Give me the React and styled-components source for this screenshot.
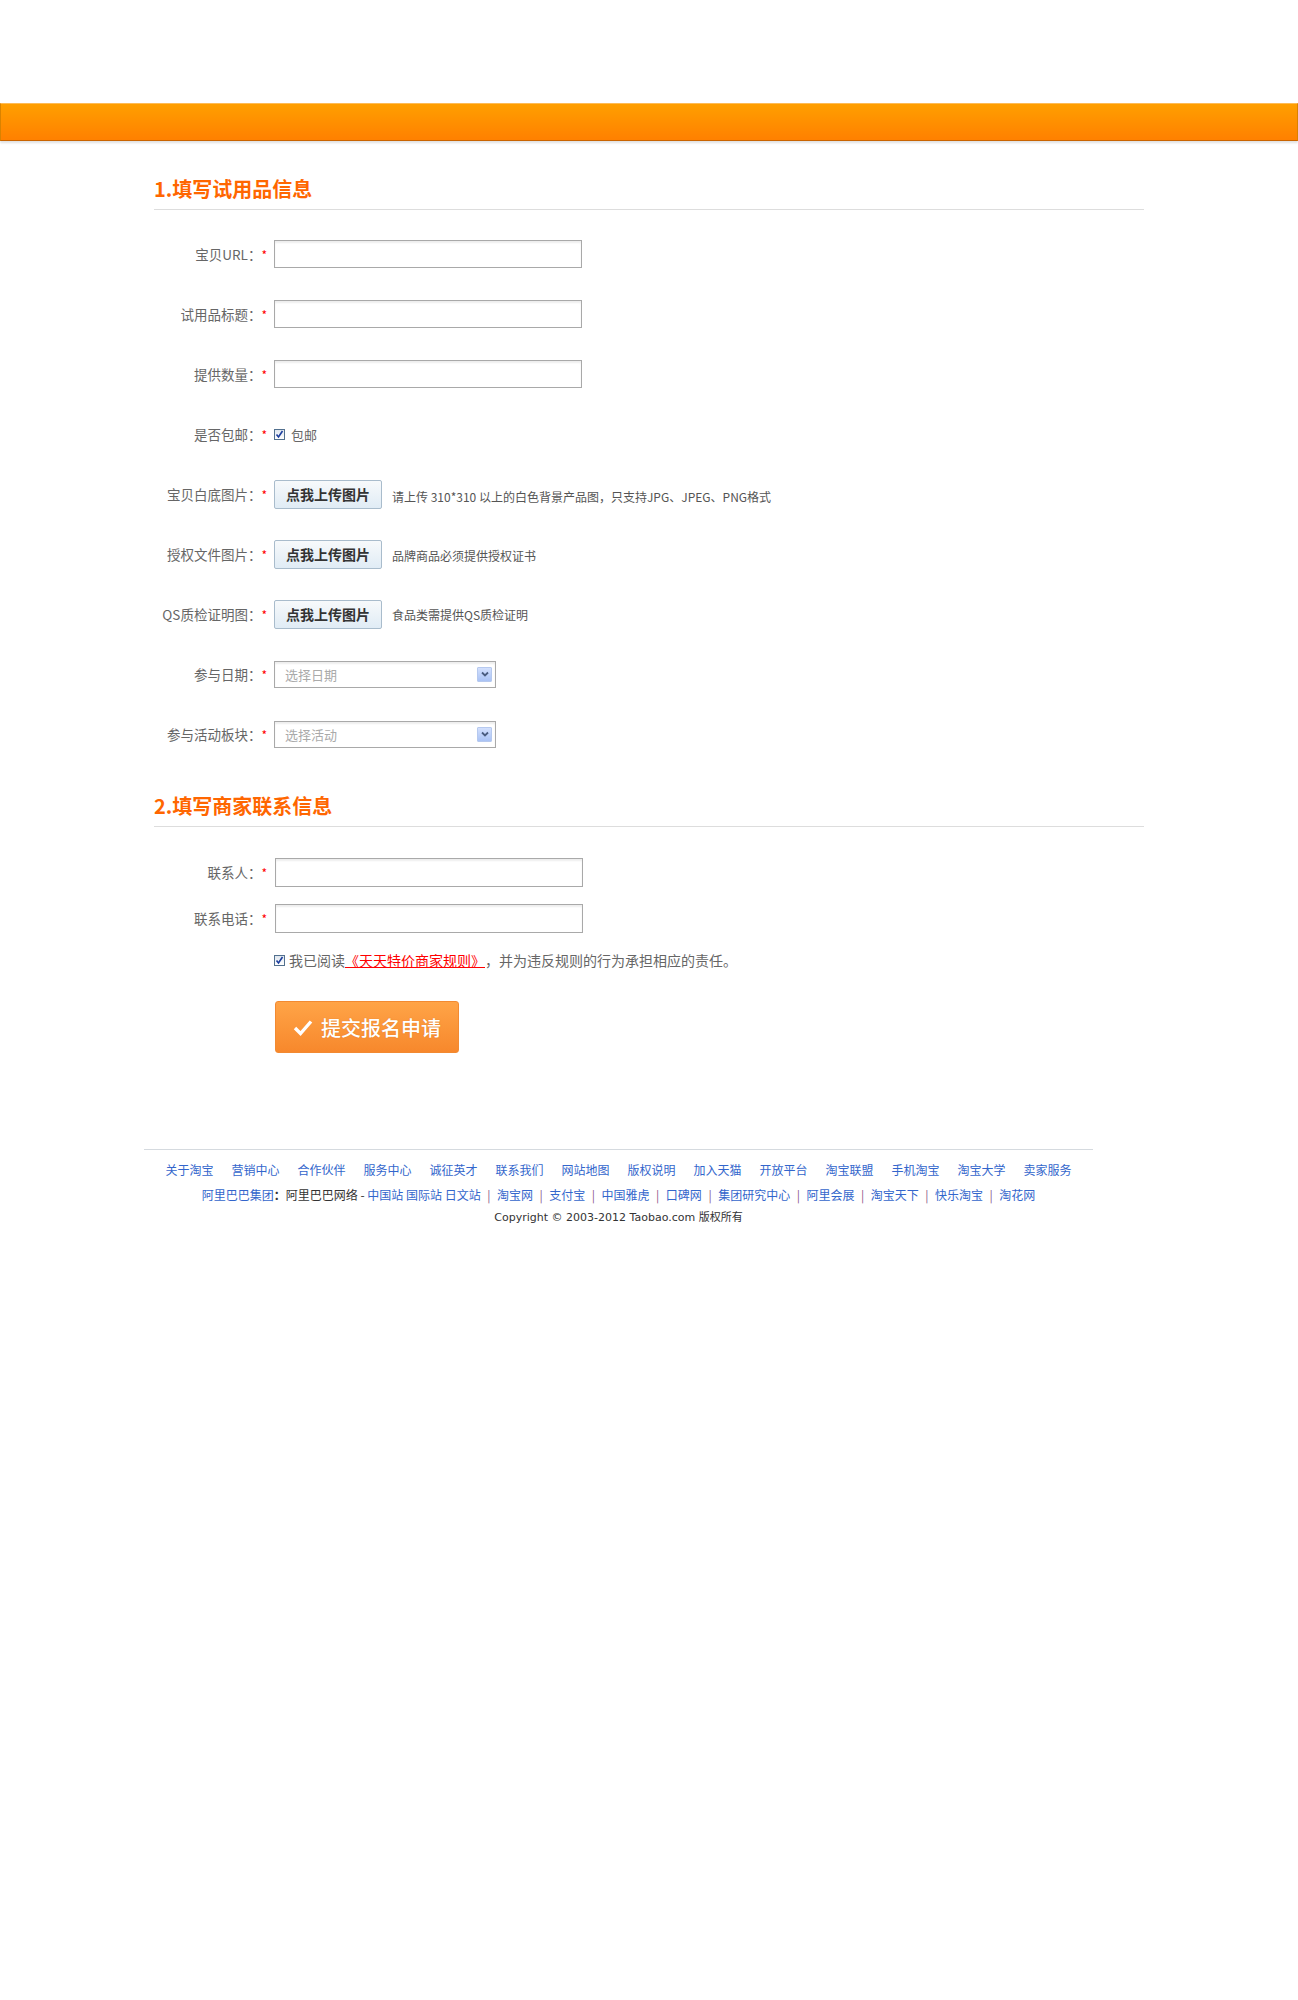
import React from 'react';
import styled, { createGlobalStyle } from 'styled-components';

const GlobalStyle = createGlobalStyle`
   body {
      margin: 0;
      background: #fff;
      font-family: 'Noto Sans CJK SC', 'Noto Sans', sans-serif;
      color: #666;
      text-spacing-trim: space-all;
   }
`;

const Page = styled.div`
   box-sizing: border-box;
   min-height: 2000px;
   padding-top: 103px;
`;

const TopBar = styled.div`
   height: 36px;
   background: linear-gradient(#ff9f00, #ff8000);
   border: 1px solid #d98200;
   border-top-color: #ffbb55;
   border-bottom-color: #c96400;
   box-shadow: 0 2px 2px rgba(0, 0, 0, 0.12);
`;

const Main = styled.div`
   width: 990px;
   margin: 0 auto;
`;

const SectionTitle = styled.h2`
   margin: ${(p) => p.top}px 0 0;
   padding: 0 0 8px;
   font-size: 20px;
   line-height: 24px;
   font-weight: bold;
   color: #ff6600;
   border-bottom: 1px solid #dddddd;
`;

const FormList = styled.div`
   margin-top: ${(p) => p.top}px;
   display: flex;
   flex-direction: column;
`;

const Row = styled.div`
   display: flex;
   align-items: center;
   height: ${(p) => p.h}px;
`;

const Label = styled.div`
   width: 120px;
   display: flex;
   justify-content: flex-end;
   align-items: center;
   font-size: 13.5px;
   color: #666;
   white-space: nowrap;
   .star {
      color: #ff0000;
      margin-right: 7px;
      font-size: 12px;
   }
`;

const TextInput = styled.input`
   box-sizing: border-box;
   width: 308px;
   height: ${(p) => p.h || 28}px;
   margin-left: ${(p) => p.shift || 0}px;
   border: 1px solid #a9a9a9;
   box-shadow: inset 0 2px 2px #eee;
   padding: 0 6px;
   font-size: 13px;
   outline: none;
`;

const Check = styled.span`
   box-sizing: border-box;
   display: inline-flex;
   align-items: center;
   justify-content: center;
   width: 11px;
   height: 11px;
   border: 1px solid #52708e;
   background: linear-gradient(#dfe6ee, #fff);
   svg {
      display: block;
   }
`;

const CheckText = styled.span`
   margin-left: ${(p) => p.gap || 6}px;
   font-size: ${(p) => p.size || 13}px;
   color: #666;
`;

const UploadButton = styled.button`
   box-sizing: border-box;
   width: 108px;
   height: 29px;
   border: 1px solid #a9bccc;
   border-radius: 2px;
   background: linear-gradient(#f7f9fb, #e0ecf5);
   font-family: inherit;
   font-size: 14px;
   font-weight: bold;
   color: #333;
   padding: 0;
   cursor: pointer;
`;

const Hint = styled.span`
   margin-left: 10px;
   margin-top: ${(p) => p.drop || 0}px;
   font-size: 12px;
   color: #555;
`;

const Select = styled.div`
   box-sizing: border-box;
   width: 222px;
   height: 27px;
   border: 1px solid #a9a9a9;
   box-shadow: inset 0 2px 2px #eee;
   display: flex;
   align-items: center;
   justify-content: space-between;
   padding: 0 3px 0 10px;
   font-size: 13px;
   color: #aaa;
`;

const SelectArrow = styled.span`
   box-sizing: border-box;
   width: 15px;
   height: 15px;
   border: 1px solid #b6c9ef;
   border-radius: 1px;
   background: linear-gradient(#d3e0fd, #aac3f5);
   display: flex;
   align-items: center;
   justify-content: center;
`;

const Agree = styled.div`
   margin: 9px 0 0 120px;
   height: 20px;
   display: flex;
   align-items: center;
   a {
      color: #ff0000;
      text-decoration: underline;
   }
`;

const SubmitButton = styled.button`
   box-sizing: border-box;
   margin: 31px 0 0 121px;
   width: 184px;
   height: 52px;
   border: 1px solid #f28a32;
   border-radius: 3px;
   background: linear-gradient(#ffa447, #f7882c);
   display: flex;
   align-items: center;
   justify-content: center;
   gap: 8px;
   font-family: inherit;
   font-size: 20px;
   font-weight: 500;
   color: #fff;
   text-shadow: 0 0 1px rgba(180, 80, 0, 0.5);
   cursor: pointer;
`;

const Footer = styled.div`
   width: 949px;
   margin: 96px 0 0 144px;
   border-top: 1px solid #d5dadf;
   font-size: 12px;
   text-align: center;
   a {
      color: #3366cc;
      text-decoration: none;
   }
`;

const FooterLinks = styled.div`
   margin-top: 11px;
   line-height: 18px;
   display: flex;
   justify-content: center;
   gap: 18px;
`;

const FooterGroup = styled.div`
   margin-top: 7px;
   line-height: 18px;
   color: #333;
   .sep {
      color: #8a5a8a;
      margin: 0 6.5px;
   }
`;

const Copyright = styled.div`
   margin-top: 5px;
   line-height: 18px;
   color: #333;
   font-family: 'DejaVu Sans', 'Noto Sans CJK SC', sans-serif;
   font-size: 11px;
`;

const CheckBox = () => (
   <Check>
      <svg width='9' height='9' viewBox='0 0 9 9'>
         <path d='M1.5 4.5 L3.5 7 L7.5 1' fill='none' stroke='#1d3f9e' strokeWidth='1.6' />
      </svg>
   </Check>
);

const Arrow = () => (
   <SelectArrow>
      <svg width='8' height='6' viewBox='0 0 8 6'>
         <path d='M1 1.5 L4 4.5 L7 1.5' fill='none' stroke='#4a5d80' strokeWidth='1.8' />
      </svg>
   </SelectArrow>
);

const Field = ({ label, children, h = 60 }) => (
   <Row h={h}>
      <Label>
         {label}
         <span className='star'>*</span>
      </Label>
      {children}
   </Row>
);

const footerLinks = [
   '关于淘宝', '营销中心', '合作伙伴', '服务中心', '诚征英才', '联系我们', '网站地图',
   '版权说明', '加入天猫', '开放平台', '淘宝联盟', '手机淘宝', '淘宝大学', '卖家服务',
];

const groupSites = ['淘宝网', '支付宝', '中国雅虎', '口碑网', '集团研究中心', '阿里会展', '淘宝天下', '快乐淘宝', '淘花网'];

const App = () => {
   return (
      <>
         <GlobalStyle />
         <Page>
            <TopBar />
            <Main>
               <SectionTitle top={36}>1.填写试用品信息</SectionTitle>
               <FormList top={14}>
                  <Field label='宝贝URL：'>
                     <TextInput />
                  </Field>
                  <Field label='试用品标题：'>
                     <TextInput />
                  </Field>
                  <Field label='提供数量：'>
                     <TextInput />
                  </Field>
                  <Field label='是否包邮：'>
                     <CheckBox />
                     <CheckText>包邮</CheckText>
                  </Field>
                  <Field label='宝贝白底图片：'>
                     <UploadButton>点我上传图片</UploadButton>
                     <Hint drop={4}>请上传 310*310 以上的白色背景产品图，只支持JPG、JPEG、PNG格式</Hint>
                  </Field>
                  <Field label='授权文件图片：'>
                     <UploadButton>点我上传图片</UploadButton>
                     <Hint drop={2}>品牌商品必须提供授权证书</Hint>
                  </Field>
                  <Field label='QS质检证明图：'>
                     <UploadButton>点我上传图片</UploadButton>
                     <Hint>食品类需提供QS质检证明</Hint>
                  </Field>
                  <Field label='参与日期：'>
                     <Select>
                        选择日期
                        <Arrow />
                     </Select>
                  </Field>
                  <Field label='参与活动板块：'>
                     <Select>
                        选择活动
                        <Arrow />
                     </Select>
                  </Field>
               </FormList>

               <SectionTitle top={30}>2.填写商家联系信息</SectionTitle>
               <FormList top={22}>
                  <Field label='联系人：' h={46}>
                     <TextInput h={29} shift={1} />
                  </Field>
                  <Field label='联系电话：' h={46}>
                     <TextInput h={29} shift={1} />
                  </Field>
               </FormList>
               <Agree>
                  <CheckBox />
                  <CheckText size={14} gap={4}>
                     我已阅读<a href='#rules'>《天天特价商家规则》</a>，并为违反规则的行为承担相应的责任。
                  </CheckText>
               </Agree>
               <SubmitButton>
                  <svg width='20' height='17' viewBox='0 0 20 17'>
                     <path d='M2 9 L7.5 14.5 L18 2.5' fill='none' stroke='#fff' strokeWidth='3.4' />
                  </svg>
                  提交报名申请
               </SubmitButton>
            </Main>

            <Footer>
               <FooterLinks>
                  {footerLinks.map((l) => (
                     <a key={l} href='#f'>
                        {l}
                     </a>
                  ))}
               </FooterLinks>
               <FooterGroup>
                  <a href='#g'>阿里巴巴集团</a>
                  <b>：</b>阿里巴巴网络 - <a href='#g'>中国站</a> <a href='#g'>国际站</a>{' '}
                  <a href='#g'>日文站</a>
                  {groupSites.map((s) => (
                     <React.Fragment key={s}>
                        <span className='sep'>|</span>
                        <a href='#g'>{s}</a>
                     </React.Fragment>
                  ))}
               </FooterGroup>
               <Copyright>Copyright © 2003-2012 Taobao.com 版权所有</Copyright>
            </Footer>
         </Page>
      </>
   );
};

export default App;
